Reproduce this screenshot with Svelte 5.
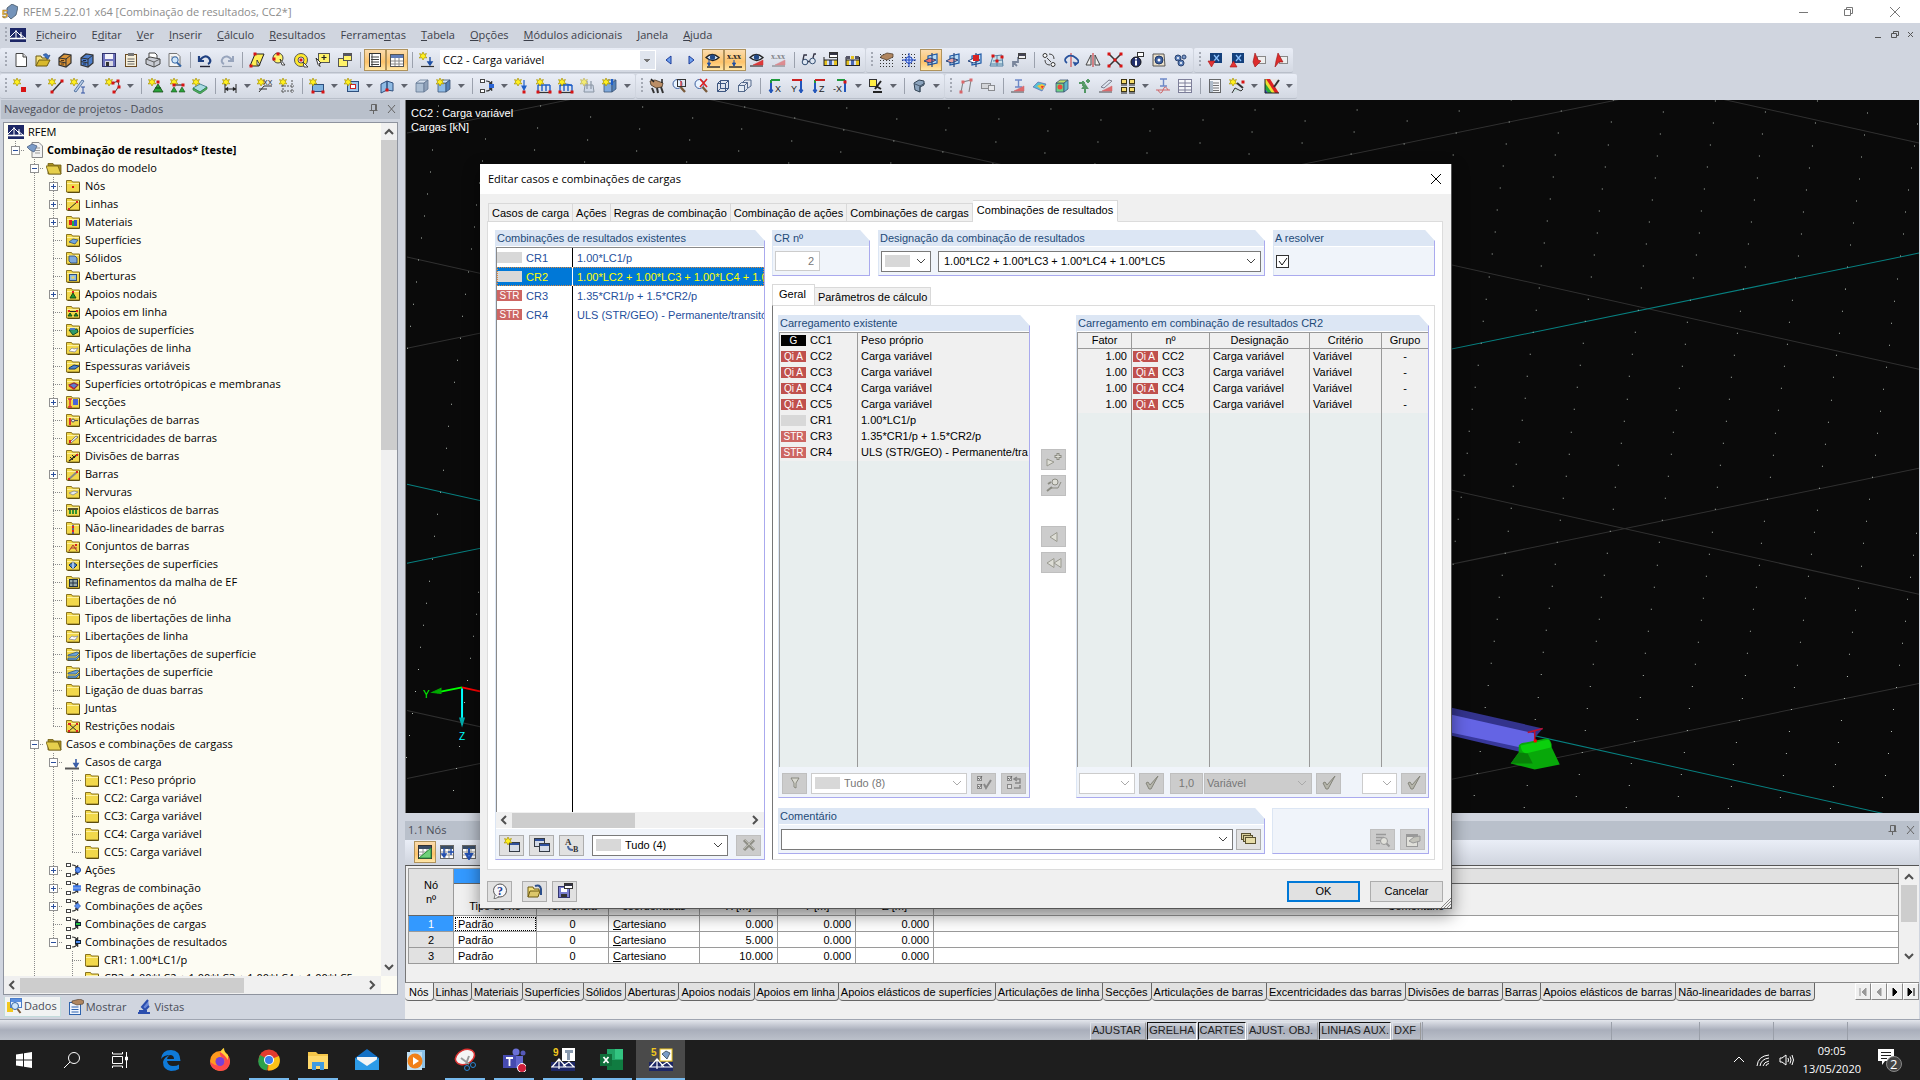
<script>
    // =========================
    // ICON HELPERS
    // =========================

    const p = (d, stroke = '#333', fill = 'none', w = 1.2) =>
        `<path d="${d}" stroke="${stroke}" fill="${fill}" stroke-width="${w}"/>`;
    const r = (x, y, w, h, fill, stroke = 'none') =>
        `<rect x="${x}" y="${y}" width="${w}" height="${h}" fill="${fill}" stroke="${stroke}"/>`;
    const c = (x, y, rad, fill, stroke = 'none') =>
        `<circle cx="${x}" cy="${y}" r="${rad}" fill="${fill}" stroke="${stroke}"/>`;

    const star = p('M4 0l1 2.4L7.400 1.500 6.200 4 8 5.800 5.300 5.700 4 8 2.900 5.700.200 6 1.700 4 .600 1.600 3 2.400z', '#a89200', '#fff01e', 0.7);
    const dot = (x, y) => r(x - 1.5, y - 1.5, 3, 3, '#d81414');
    const win = (x, y, w, h) =>
        r(x + .5, y + .5, w - 1, h - 1, '#d3dae6', '#333a44') + r(x + 1, y + 1, w - 2, 2, '#2d4f9c');
    const lens = c(6.5, 6, 4.5, '#eaf4ff', '#3b5f9e') + p('M9.500 9l4.500 5', '#7a5a3a', 'none', 2.4);
    const cabinet = (a, b) =>
        p('M2 6l5-4 7 1v8l-5 4-7-2z', '#333', a) + p('M9 15V7l5-4M2 6l7 1M2 9.500l7 1.500', '#333', 'none', 1) + r(4, 8, 3, 1, b) + r(4, 11.5, 3, 1, b);
    const flow = (end) =>
        r(1.5, 1.5, 4, 3, '#fff', '#444') + r(1.5, 11.5, 4, 3, '#fff', '#444') +
        p('M7 3q4 0 5 3M7 13q4 0 5-3', '#333', 'none', 1.2) + p('M10 6h3v-3z', '#333', '#333', .5) + p('M10 10h3v3z', '#333', '#333', .5) + end;
    const box = (a, b, d) =>
        p('M2 5h8v9H2z', '#3c5677', a, .8) + p('M2 5l4-3h8l-4 3z', '#3c5677', b, .8) + p('M10 5l4-3v9l-4 3z', '#3c5677', d, .8);
    const axis = (x, label, col) =>
        p('M4 2v12M4 2h9', col, 'none', 2) + p('M2 12h4l-2 3z', '#2255bb', '#2255bb', 1) + p('M4 5v7', '#2255bb', 'none', 2) +
        `<text x="${x}" y="14" font-size="9" font-family="Liberation Sans" fill="#222">${label}</text>`;
    const eye = p('M1 5.500q6-6 13 0-6 6-13 0z', '#222', '#dbe9fa', 1.3) + c(7.5, 5.2, 2.600, '#234a86');
    const eyeText = '<text x="0" y="7" font-size="8" font-weight="700" font-family="Liberation Serif" fill="#222">x.xx</text>';
    const wedge = p('M1 14h13', '#333') + p('M4 13l10-5v5z', '#c33', '#e03a3a', .5);
    const cols = r(1, 8, 3, 5, '#e3c11e') + r(6, 8, 3, 5, '#4a68b4') + r(11, 8, 3, 5, '#e3c11e') + p('M1 5v9M14.500 5v9M1 8h14M1 13.500h14', '#222', 'none', 1);
    const sheet = r(2.5, 1.5, 11, 13, '#fff', '#333') + p('M4 5h8M4 7.500h8M4 10h8M4 12.500h8', '#444', 'none', 1);
    const plane = (a) => p('M5 4l9-2v9l-9 2z', '#1c56a4', '#b7dbf6', 1.2) + p('M1 9l6-3 6 2-6 3z', '#27477f', a, 1) + p('M9 1v14', '#27477f');
    const dots = p('M1 8.500h14M1 11.500h14M1 14.500h14M1 5.500h14M1 2.500h14', '#333', 'none', 1.1).replace('/>', ' stroke-dasharray="1 2"/>');
    const bridge = r(0, 1, 16, 14, '#1d2766') + p('M0 11.500h16', '#fff', 'none', 1.6) + p('M0 10l6-6 6 6M6 3v8M11 5v6M10 7l5 4', '#fff', 'none', 1);
    const loads = p('M2 7v6M6 7v6M10 7v6M14 7v6M2 7h12', '#1f5fc8', 'none', 1.4) + p('M1 14.500h14', '#333', 'none', 1.200) + dot(2, 14) + dot(14, 14);

    const icons = {
        new: p('M3 1.500h7l3.500 3.500v9.500H3z', '#444', '#fff', 1) + p('M10 1.500V5h3.500', '#444', '#ddd', 1),
        open: p('M1 14V4h5l1 2h5v3', '#6d5a13', '#f4e07a', 1) + p('M1 14l3-6h11l-3 6z', '#6d5a13', '#d9b92c', 1) + p('M8 3q4-3 5 1l2-1-2 4-3-2', '#2c4f8a', '#3b72c4', .8),
        cab1: cabinet('#d8943a', '#5d3408'),
        cab2: cabinet('#4d7ecb', '#14264f'),
        save: r(1.5, 1.5, 13, 13, '#6e73bd', '#33366e') + r(4, 2, 8, 5, '#f3f3fa') + r(4, 9, 8, 5, '#d8d8e4') + r(5, 10, 3, 4, '#333'),
        clip: r(2.5, 2.5, 11, 12, '#f6efda', '#6b4b22') + r(5, 1, 6, 3, '#777') + p('M4.500 7h7M4.500 9.500h7M4.500 12h7', '#666', 'none', 1),
        print: p('M4 6V1h6l2 2v3', '#444', '#fff', 1) + p('M1 7l4-2 10 2v5l-6 3-8-3z', '#444', '#c9ccd4', 1) + p('M1 7l8 3 6-3M9 10v5', '#555', 'none', .9),
        preview: p('M2 1.500h8l3 3v10H2z', '#777', '#f3f3f3', 1) + p('M4 5h6M4 7h5', '#999', 'none', 1) + c(8, 8, 3.2, '#cfe6fa', '#3566a5') + p('M10 10.500l4 4', '#3566a5', 'none', 2),
        undo: p('M2 4v5h5M3 8q5-6 9-2 3 4-1 6', '#1e3f80', 'none', 2.2) + p('M3 14.500h10', '#223', 'none', 1.4),
        redo: p('M14 4v5H9M13 8q-5-6-9-2-3 4 1 6', '#98a5bd', 'none', 2) + p('M3 14.500h10', '#9aa3b3', 'none', 1.2),
        sel1: p('M6 2h9l-5 12H1z', '#222', '#ffee55', 1) + p('M8 8l3 5h-3z', '#222', '#fff', .8) + dot(6, 2) + dot(2, 14),
        sel2: c(7, 6, 5, '#fff36a', '#444') + dot(7, 2) + dot(3, 7) + p('M9 7l5 6-3 0z', '#222', '#fff', .8),
        sel3: c(8, 8, 6.5, '#ffe92c', '#555') + c(8, 8, 3, '#fff', '#555') + dot(8, 8) + p('M10 10l5 5h-4z', '#222', '#fff', .8),
        sel4: r(3.5, 1.5, 11, 9, '#fff36a', '#555') + p('M9 3v5M6.500 5.500h5', '#222') + p('M1 6l5 5-2 .500 1 3-2-2z', '#222', '#fff', .9),
        sel5: r(1.5, 6.500, 9, 8, '#fff36a', '#555') + r(6.5, 1.500, 8, 7, '#fff36a', '#555') + r(7, 2, 7, 2, '#556'),
        nav: sheet + p('M5 2v12', '#444', 'none', 1),
        tbl: r(1.5, 2.500, 13, 12, '#fff', '#555') + r(2, 3, 12, 3, '#5f7cb8') + p('M2 9h12M2 12h12M6 6v8M10 6v8', '#888', 'none', 1),
        lcnew: star + p('M2 14.500h13', '#333') + p('M11 5v7M9 10l2 3 2-3z', '#1d4fa5', '#1d4fa5', 1.4),
        left: p('M10 4v8L5 8z', '#1d3c9a', '#6d9fee', 1),
        right: p('M6 4v8l5-4z', '#1d3c9a', '#6d9fee', 1),
        eye1: eye + p('M2 15h13', '#333', 'none', 1.500) + p('M4 7v6M2.500 11l1.500 3 1.500-3z', '#1d4fa5', '#1d4fa5', 1),
        eye2: eyeText + p('M2 15h13', '#333', 'none', 1.500) + p('M7 8v5M5.500 11l1.500 3 1.500-3z', '#1d4fa5', '#1d4fa5', 1),
        eye3: wedge + eye,
        eye4: '<g opacity=".5">' + eyeText + wedge + '</g>',
        glasses: c(4, 10, 2.800, '#dde6f2', '#334d70') + c(11.500, 9, 2.800, '#dde6f2', '#334d70') + p('M2 8L3 3h3M12 6l1-4h2M7 9.500h1.800', '#334', 'none', 1.300),
        calc1: cols + r(6.500, .500, 8, 5, '#fff', '#333') + r(7, 1, 7, 2, '#334'),
        calc2: cols + r(1, 4, 4, 3, '#556') + r(6, 4, 3, 3, '#e3c11e') + r(10, 4, 4, 3, '#556'),
        grid1: dots + p('M2 4l6-3 6 1v3l-6 3-6-2z', '#543', '#b08660', .8),
        grid2: dots + c(8, 8, 3.300, '#cfe0ff', '#1740c0') + p('M8 1v14M1 8h14', '#1740c0', 'none', 1),
        pl1: plane('#e86b6b'),
        pl2: plane('#e9a2a2'),
        pl3: plane('#ffffff') + r(6, 3, 6, 6, '#d62222'),
        pl4: p('M1 14L4 4l9-1 1 11zM4 9l9-1M8 4v10M2 12h12', '#5580a3', '#c9e1ea', 1) + dot(4, 4) + dot(8, 9) + dot(13, 5),
        pl5: p('M2 15v-5h5V6h3M2 10l4 4', '#7a869c', 'none', 1.800) + r(7.500, 1.500, 7, 5, '#eee', '#444') + r(8, 2, 6, 2, '#445'),
        move: c(4, 3.500, 2, '#fff', '#333') + c(12, 12.500, 2, '#fff', '#333') + p('M8 2q5 0 5 5M4 8q0 5 5 5', '#444', 'none', 1) + p('M6 6l4 4', '#444', 'none', 1),
        rot: p('M8 1v14', '#c33', 'none', 1) + p('M4 11Q0 8 4 5t9 1 0 6', '#27519c', 'none', 1.700) + p('M10 10l2 4 3-3z', '#27519c', '#27519c', .5),
        mirror: p('M6 3v10H1zM10 3v10h5z', '#444', '#eee', 1) + p('M8 1v14', '#c22', 'none', 1),
        cross: p('M2 2l12 12M14 2L2 14', '#333', 'none', 1.5) + dot(2, 2) + dot(14, 2) + dot(2, 14) + dot(14, 14) + dot(8, 8),
        info: c(7, 10, 5, '#22306e', '#111') + r(6, 8.500, 2, 5, '#fff') + r(6, 6, 2, 1.500, '#fff') + r(8.500, .500, 6, 4, '#fff', '#333'),
        gearp: p('M2 2h11l1 12H2z', '#555', '#eadfc8', 1) + c(8, 8, 4, '#3d5f9e', '#1e3766') + c(8, 8, 1.500, '#fff'),
        gears: c(5, 6, 3, '#5d80b8', '#2a4371') + c(11, 5, 2, '#7f9cca', '#2a4371') + c(8, 11, 3, '#5d80b8', '#2a4371') + c(5, 6, 1, '#fff') + c(8, 11, 1, '#fff'),
        ext1: r(3, 1, 12, 10, '#14407c') + p('M7 3l5 6M12 3L7 9', '#8cc2ff') + p('M1 9h7l-3.500 6z', '#a11', '#e23434', .6),
        ext2: r(3, 1, 12, 10, '#14407c') + p('M7 3l5 6M12 3L7 9', '#8cc2ff') + p('M1 15h7L4.500 9z', '#a11', '#e23434', .6),
        ext3: r(6.5, 4.500, 8, 7, '#eee', '#888') + p('M4 1l3 7 3 1-6 6-2-5z', '#911', '#dd2c2c', .6),
        ext4: r(6.5, 4.500, 8, 7, '#eee', '#888') + p('M5 1l5 9-4 0-4 5 1-6z', '#911', '#dd2c2c', .6),
        // second row
        node: star + r(8, 9, 5, 5, '#d81414'),
        line: star + p('M4 14L14 3', '#333', 'none', 1.400) + dot(4, 14) + dot(14, 3),
        bar: star + p('M4 13L12 2l2 1L6 14z', '#3c5f92', '#b8cde8', .8) + p('M11 9h4M13 9v6M11 15h4', '#3455a4', 'none', 1),
        poly: star + p('M8 5l5-2 1 5-4 6', '#444', 'none', 1) + dot(8, 5) + dot(13, 3) + dot(14, 9) + dot(9, 14),
        supp: star + p('M10 6l5 8H5z', '#174d17', '#2aa33a', .8) + p('M7 10h6', '#174d17') + dot(10, 4),
        supl: star + p('M3 7h11', '#333') + p('M4 9l3 5H1zM12 9l3 5H9z', '#174d17', '#2aa33a', .6) + dot(4, 7) + dot(13, 7),
        sups: p('M1 10l7-4 7 3-7 5z', '#3f7f8a', '#a9dbe2', .9) + p('M1 10v2l7 4 7-5V9l-7 5z', '#2c7a3c', '#4db35f', .7) + star,
        dim: star + p('M3 6v9M14 6v9M3 11h11', '#222', 'none', 1) + p('M3 11l3-2v4zM14 11l-3-2v4z', '#222', '#222', .3),
        xx: star + '<text x="6" y="7" font-size="7" font-family="Liberation Sans" fill="#222">XX</text>' + p('M2 14l5-6h8M2 11h8', '#333', 'none', 1),
        guide: star + p('M4 7v8M13 2v13M2 8h13M2 13h13', '#555', 'none', 1).replace('/>', ' stroke-dasharray="2 1"/>'),
        surf: r(3.5, 6.500, 11, 7, '#7fb3e0', '#2e4f7d') + star + dot(4, 14) + dot(14, 14),
        opening: r(3.5, 3.500, 11, 10, '#9cc4ea', '#2e4f7d') + r(6.5, 6.500, 5, 4, '#fff', '#c22') + star,
        wall: p('M2 6l6-3v9l-6 3zM8 3l6 2v8l-6-1z', '#2e4f7d', '#8fbbe4', 1) + dot(8, 12),
        solid: '<g opacity=".75">' + box('#9db4cc', '#d3e0ee', '#748ba8') + '</g>',
        solidn: box('#8fbce8', '#cfe4f8', '#5583b9') + star,
        comb: flow(p('M10 8h5', '#2a64d4', 'none', 4)),
        ld1: star + p('M10 2v8M8 8l2 4 2-4z', '#1f5fc8', '#1f5fc8', 1.200) + dot(10, 14),
        ld2: loads + star,
        ld3: loads + p('M2 8q6-4 12 0', '#1f5fc8') + star,
        ld4: '<g opacity=".6">' + p('M5 7h8l1 7H4z', '#567', '#c7d3e6', 1) + p('M7 3v8M11 3v8', '#567') + star + '</g>',
        ld5: box('#7fa9dc', '#cfe4f8', '#5583b9') + p('M10 1v6', '#1f5fc8', 'none', 2) + star,
        grab: p('M1 3l5-1 8 3-1 4-6 1-5-3z', '#432', '#bb8e66', .8) + p('M3 10l2 5M8 10l1 5M12 9l2 6', '#333', 'none', 2) + p('M2 1l3 3M13 1v4', '#222', 'none', 1.500),
        zoom1: lens + r(6.5, 1.500, 8, 7, 'none', '#333') + p('M10 3v5', '#d22'),
        zoom2: lens + p('M7 1l7 8M14 1L7 9', '#d22', 'none', 1.600),
        cube1: p('M2.500 5.500h8v8h-8zM5.500 2.500h8v8h-8zM2.500 5.500l3-3M10.500 5.500l3-3M10.500 13.500l3-3M2.500 13.500l3-3', '#3c5580', 'none', 1),
        cube2: r(1.5, 7.500, 6, 6, '#e5ecf5', '#556a8c') + p('M1.500 7.500l3-3h6v6l-3 3M7.500 7.500l3-3', '#556a8c', 'none', 1) + p('M6 4l2-2h6v6l-3 2', '#556a8c', 'none', 1),
        ax: axis(8, 'X', '#1f9a3c'),
        ay: p('M12 2v12', '#2255bb', 'none', 2) + p('M3 2h10', '#c22', 'none', 2) + p('M10 12h4l-2 3z', '#2255bb', '#2255bb', 1) + '<text x="2" y="14" font-size="9" font-family="Liberation Sans" fill="#222">Y</text>',
        az: axis(8, 'Z', '#1f9a3c') + p('M4 2h10', '#c22', 'none', 2),
        amx: p('M12 2v12', '#2255bb', 'none', 2) + p('M4 2h8', '#1f9a3c', 'none', 2) + dot(12, 4) + '<text x="0" y="14" font-size="9" font-family="Liberation Sans" fill="#222">-X</text>',
        scope: r(1.5, 1.500, 7, 7, '#ffee44', '#333') + p('M13 3L7 11M5 14h9M8 8l5 3', '#222', 'none', 2),
        stone: p('M3 5l5-3 5 1v4l-4 2v5l-5-2z', '#345', '#8ba3bd', 1) + p('M4 6l5 2 5-3M9 8v6', '#345', 'none', .8),
        frame: '<g opacity=".6">' + p('M3 14L5 4l8-2-2 12', '#444', 'none', 1.100) + dot(5, 4) + dot(13, 2) + dot(3, 14) + '</g>',
        cam: '<g opacity=".6">' + r(1.5, 5.500, 9, 5, '#ccc', '#555') + r(8.5, 7.500, 6, 5, '#eee', '#555') + '</g>',
        res1: '<g opacity=".7">' + p('M5 2h7M8.500 2v7M5 9h7', '#3c62b8', 'none', 1.400) + wedge + '</g>',
        res2: p('M1 9l5-5 8 2-4 7z', '#55a', '#56c0d4', .6) + p('M5 8l5-2 3 2-3 4z', 'none', '#f4c03a') + p('M9 8l3 0-2 3z', 'none', '#e33'),
        res3: box('#6fd086', '#bfe06a', '#5fb7c9') + c(6, 9, 2.500, '#ef4a3a'),
        res4: '<g opacity=".7">' + p('M9 15v-7M7 10l2-3 2 3z', '#197a2b', '#197a2b', 2) + p('M3 5h6M7 3v5', '#197a2b', 'none', 2) + p('M12 1v4M10 3h4', '#197a2b', 'none', 2) + '</g>',
        res5: '<g opacity=".7">' + p('M3 9l8-7 3 1-8 7z', '#556', '#dfe7f2', 1) + wedge + '</g>',
        quad: r(1.5, 1.500, 5, 4, '#f6dc6e', '#3c3412') + r(9.5, 1.500, 5, 4, '#f6dc6e', '#3c3412') + r(1.5, 9.500, 5, 4, '#f6dc6e', '#3c3412') + r(9.5, 9.500, 5, 4, '#f6dc6e', '#3c3412') + p('M1 7h6M9 7h6M1 15h6M9 15h6', '#222', 'none', 1.2),
        res6: '<g opacity=".7">' + p('M5 1h7M8.500 1v7M5 8h7', '#3c62b8', 'none', 1.400) + p('M1 12h14M3 12q3 6 5 0t5 0', '#c33', 'none', 1) + '</g>',
        res7: '<g opacity=".7">' + r(1.5, 1.500, 13, 13, '#fff', '#557') + p('M8 1v14M1 5h14M1 8.500h14M1 12h14', '#557', 'none', 1) + '</g>',
        rep: '<g opacity=".7">' + sheet + r(3, 3, 3, 11, '#9ab') + '</g>',
        wand: star + p('M3 15l3-5 6 3 2-2', '#333', '#cdd', 1) + p('M8 5l6 5', '#333', 'none', 2) + dot(14, 4),
        palette: r(1, 1, 14, 14, '#e5e5e5') + p('M1 1h2l10 14H1z', 'none', '#eee033') + p('M2 1h4l9 14h-4z', 'none', '#d22') + p('M1 5l7 10H4l-3-4z', 'none', '#28a83c') + p('M1 11l3 4H1z', 'none', '#24c') + p('M15 2l-5 7', '#333', 'none', 2) + p('M1 1v14h14', '#222', 'none', 1),
        // dialog buttons
        wnew: win(5, 5, 11, 10) + star,
        wcopy: win(0, 1, 11, 9) + win(5, 6, 11, 9),
        renum: '<text x="1" y="8" font-size="9" font-weight="700" font-family="Liberation Serif" fill="#333">A</text><text x="9" y="15" font-size="8" font-weight="700" font-family="Liberation Serif" fill="#333">B</text>' + p('M4 9q0 4 5 4', '#4a69a5', 'none', 2),
        del: p('M3 3l10 10M13 3L3 13', '#8e8e86', 'none', 3) + p('M3 2l10 10M13 2L3 12', '#b9b9b0', 'none', 1),
        help: c(8, 7.500, 6.500, '#f7f7fb', '#555') + p('M3 12l-1 4 5-2', '#555', '#f7f7fb', .8) + '<text x="5" y="12" font-size="12" font-weight="700" font-family="Liberation Serif" fill="#25408f">?</text>',
        load: p('M1 14V4h5l1 2h5v3', '#6d5a13', '#f4e07a', 1) + p('M1 14l2-6h10l-2 6z', '#6d5a13', '#dcc76a', 1) + p('M8 3q5-2 6 3v6', '#2c4f8a', 'none', 2),
        store: r(1.5, 3.500, 11, 11, '#7a7fd0', '#33366e') + r(4, 5, 6, 4, '#fff') + r(4, 11, 6, 3, '#333') + r(7.500, .500, 8, 5, '#fff', '#333') + r(8, 1, 7, 2, '#334'),
        funnel: p('M4 3h8l-3 5v5l-2-1V8z', '#88887e', '#d8d8d0', 1),
        chk: r(1.5, 1.500, 4, 4, '#ddd', '#888') + r(1.5, 9.500, 4, 4, '#ddd', '#888') + p('M2 3l1.500 1.500L6 1M2 11l1.500 1.500L6 9', '#666', 'none', 1) + p('M8 9l2 4 5-8', '#888', 'none', 2),
        inv: r(1.5, 1.500, 4, 4, '#ddd', '#888') + r(1.5, 9.500, 4, 4, '#ddd', '#888') + p('M2 3l1.500 1.500L6 1', '#666', 'none', 1) + p('M8 4h6v4H9M11 2L8 4l3 2M14 10v3H8', '#888', 'none', 1.500),
        tick: p('M2 8l2-1 2 3 8-9-7 13H5z', '#85857b', '#b4b4aa', 1),
        addp: p('M1 7l7 3-7 4z', '#99998f', '#deded6', 1) + p('M12 1v7M8.500 4.500h7', '#8b8b82', 'none', 3) + p('M12 2v5M9.500 4.500h5', '#e0e0d8', 'none', 1),
        addi: p('M1 13l5-4M2 6l3-2', '#8b8b82', 'none', 2) + c(9, 4, 3, '#deded6', '#8b8b82') + p('M4 10l8 0 3-6', '#8b8b82', 'none', 1),
        back: p('M11 3.500v9L4 8z', '#99998f', '#deded6', 1),
        back2: p('M8 3.500v9L1 8zM15 3.500v9L8 8z', '#99998f', '#deded6', 1),
        notes: r(.5, 2.500, 9, 6, '#d9cf9b', '#5a5230') + r(2.5, 4.500, 9, 6, '#d9cf9b', '#5a5230') + r(4.5, 6.500, 10, 6, '#e6dca8', '#5a5230'),
        look: p('M1 2.500h10M1 5.500h8M1 8.500h5M1 11.500h4', '#999', 'none', 1.400) + c(9, 9, 3.500, '#e0e0da', '#999') + p('M11.500 11.500l3 3', '#999', 'none', 2),
        hand: r(1.5, 2.500, 11, 12, '#e0e0da', '#999') + r(2, 3, 10, 2, '#999') + p('M4 9l4 2 7-2V4l-6 1z', '#999', '#c2c2ba', 1),
        // table tool bar
        tb1: r(1.5, 1.500, 13, 13, '#fff', '#333') + r(2, 2, 12, 3, '#3a4d66') + p('M2 8h12M2 11h12M6 5v9M10 5v9', '#999', 'none', 1) + p('M2 14L14 4v10z', '#2b8f38', '#6fd07a', 1),
        tb2: r(1.5, 1.500, 13, 13, '#fff', '#666') + r(2, 2, 12, 3, '#3a4d66') + p('M2 8h12M2 11h12M6 5v9M10 5v9', '#999', 'none', 1) + p('M5 4v8M3 10l2 3 2-3zM9 8h6M12 5v6', '#2450b0', '#2450b0', 1.500),
        tb3: r(1.5, 1.500, 13, 13, '#fff', '#666') + r(2, 2, 12, 3, '#3a4d66') + p('M2 8h12M2 11h12M6 5v9M10 5v9', '#999', 'none', 1) + p('M8 4v7M5 10l3 5 3-5z', '#2450b0', '#4d7ce0', 2),
        // navigator tabs
        tdata: r(1, 4, 6, 10, '#f2c81e') + r(4.500, .500, 11, 9, '#eef4fd', '#4a7cc8') + r(5, 1, 10, 3, '#5a8fe0') + c(9, 8, 3.500, '#cfe6fa', '#3566a5') + p('M11.500 11l3 4', '#7a5a3a', 'none', 2),
        tshow: r(1.500, 3.500, 11, 12, '#eef4fd', '#2e63ad') + p('M3.500 8h7M3.500 10.500h7M3.500 13h7', '#2e63ad', 'none', 1) + p('M4 2l8-2 4 2-1 3-6 1-5-2z', '#543', '#b08660', .7),
        tview: p('M12 1L6 8l3 3 4-4M2 14h12M3 12l8 0', '#2c4fae', '#6a88d8', 2),
        // tree
        rfem: bridge,
        doc: p('M5 .500h7l3.500 3.500v11.500H5z', '#888', '#f3f3f3', 1) + p('M8 6h5M8 8.500h5M8 11h5', '#999', 'none', 1) + p('M0 5l5-3 5 2-3 6-4-2z', '#4b6184', '#7b9cc8', .8),
        folderOpen: p('M2 3.500h5l1 1.500h7v9H2z', '#6d5c12', '#a88f20', .8) + p('M0 6h12l3 8H3z', '#6d5c12', '#e6cf4c', .8),
        cases: p('M0 14.500h14', '#555', 'none', 2) + p('M11 5v6M9 9.500l2 3.500 2-3.500z', '#3c5fa8', '#3c5fa8', 1.600),
        act: flow(c(13, 8, 2.600, '#5b90f0', '#2450b0')),
        rules: flow(p('M8 6.500h8M8 9.500h8', '#3d77e8', 'none', 2.4)),
        combA: flow(p('M12.500 5l3 3-3 3-3-3z', '#2450b0', '#5b90f0', .8)),
        combC: flow(r(10.500, 6.500, 5, 3, '#27c040', '#123')),
        combR: flow(r(10.500, 6.500, 5, 3, '#4f8cf0', '#123'))
    };

    const folderMarks = {
        none: '',
        node: r(7, 8, 2, 2, '#d81414'),
        line: p('M4 13L12 6', '#222', 'none', 1) + r(3, 12, 2, 2, '#d22') + r(11, 5, 2, 2, '#d22'),
        mat: r(4, 6, 3, 5, '#d22') + r(7, 7, 3, 5, '#2a4') + r(9, 6, 3, 6, '#35c'),
        surf: p('M4 10l4-3 5 1-3 4z', '#2e4f7d', '#6ea5e0', .8),
        solid: p('M4 6h6l2 2v5H6l-2-2z', '#2e4f7d', '#7fa9dc', .9),
        open: r(4.500, 6.500, 7, 6, '#8fbbe4', '#2e4f7d') + r(6.500, 8.500, 3, 2, '#f0d850'),
        sup: p('M8 7l3 5H5z', '#174d17', '#1e9a30', 1) + r(7, 5, 2, 2, '#d22'),
        supl: p('M3 7.500h10', '#222', 'none', 1) + p('M5 9l2 3H3zM11 9l2 3H9z', '#174d17', '#1e9a30', 1) + r(3, 6, 2, 2, '#d22') + r(11, 6, 2, 2, '#d22'),
        sups: p('M4 8l8-1 1 3-5 3z', '#14502a', '#2f9a6a', 1) + r(5, 6, 5, 2, '#4a7ac4'),
        white: p('M4 11l3-3 2 1 4-1-3 4z', '#889', '#fff', .8),
        thick: p('M4 10l5-3 5 1-4 3H4z', '#16376e', '#4f86cc', 1),
        ortho: p('M4 9l5-2 4 2-4 4z', '#8a2a4a', '#5b7fd0', 1.2) + p('M4 10l5 3', '#d22'),
        sect: p('M5 5v8M3 5h4M3 13h4', '#d33', 'none', 1.500) + r(8, 5, 5, 6, '#4a66d8'),
        hinge: r(4, 6, 2, 7, '#d33') + p('M6 8.500h7', '#555') + c(8, 8.500, 1.500, '#eee', '#555'),
        ecc: p('M4 13l7-7 2 1-7 6z', '#666', '#eee', .8) + r(4, 10, 2, 3, '#d22'),
        div: p('M4 13L13 6', '#222') + p('M7 7l3 3M5 9l3 3', '#222', 'none', 1) + r(11, 6, 2, 2, '#d22'),
        bar: p('M4 13l8-7', '#888', 'none', 2) + r(3, 12, 2, 2, '#d22') + r(11, 5, 2, 2, '#d22'),
        rib: p('M4 9l5-2 4 1-5 3z', '#888', '#e8ecef', .8),
        elast: p('M3 7h10', '#222', 'none', 1.500) + p('M5 8v4M8 8v4M11 8v4', '#1e8a30', 'none', 1.800),
        nonlin: p('M8 5v9', '#33a', 'none', 1.500) + r(7, 6, 2, 2, '#d22') + r(7, 10, 2, 2, '#d22'),
        set: p('M4 13l4-6 4 6M6 10h6', '#a33', 'none', 1) + r(10, 6, 2, 2, '#d22'),
        inter: p('M4 9l4-3 4 3-4 4z', '#15305e', '#4f86cc', 1) + p('M8 6v7', '#fff', 'none', 1),
        mesh: r(4.500, 5.500, 8, 7, '#9aa', '#234') + p('M4 9h8M8 5v8', '#234', 'none', 1),
        rels: p('M3 9l9-3 2 1-3 3H3zM3 12l8 0 3-3v2l-3 3H3z', '#31567f', '#6ba4da', .8),
        restr: p('M4 6l8 7M12 6l-8 7', '#333', 'none', 1) + r(3, 5, 3, 2, '#d22') + r(11, 5, 2, 2, '#d22') + r(3, 12, 2, 2, '#d22') + r(11, 12, 2, 2, '#d22')
    };

    const folder = (mark) =>
        p('M1.500 2.500h5l1 1.500h7v10h-13z', '#8a7420', '#f2d84a', 1) + p('M2 5.500h12', '#fff2a0', 'none', 1) + p('M14.500 5v9.500h-12', '#5c4c10', 'none', 1) + folderMarks[mark];

    // =========================
    // MENUS AND TOOL BARS
    // =========================

    const menus = ['&Ficheiro', 'E&ditar', '&Ver', '&Inserir', '&Cálculo', '&Resultados', 'Ferrame&ntas', '&Tabela', '&Opções', '&Módulos adicionais', '&Janela', '&Ajuda']
        .map((m) => {
            const at = m.indexOf('&');
            return [m.slice(0, at), m[at + 1], m.slice(at + 2)];
        });

    // "|" separator, "#" load case box, "*" pressed, trailing "," drop arrow
    const toolRows = [
        [
            'new open cab1 cab2 save clip print preview | undo redo | sel1 sel2 sel3 sel4 sel5 | *nav *tbl | lcnew # left right *eye1 *eye2 eye3 eye4 | glasses calc1 calc2',
            'grid1 grid2 *pl1 pl2 pl3 pl4 pl5 | move rot mirror cross info gearp gears',
            'ext1 ext2 ext3 ext4'
        ],
        [
            'node, line bar, poly, | supp supl sups | dim, xx guide | surf, opening, wall, solid solidn, | comb, ld1 ld2 ld3 ld4 ld5,',
            'grab zoom1 zoom2 cube1 cube2 | ax ay az amx, scope, | stone,',
            'frame cam | res1 res2 res3 res4 res5 quad, res6 res7 | rep wand, palette,'
        ]
    ].map((row) => row.map((bar) => bar.split(' ')));

    // =========================
    // TREE
    // =========================

    // guides: one character per column, the last one is the item's own
    // "|" line through, " " nothing, "T" branch, "L" last branch
    const tree = [
        ['', 'RFEM', 'rfem'],
        ['L', 'Combinação de resultados* [teste]', 'doc', '-'],
        [' T', 'Dados do modelo', 'folderOpen', '-'],
        [' |T', 'Nós', '/node', '+'],
        [' |T', 'Linhas', '/line', '+'],
        [' |T', 'Materiais', '/mat', '+'],
        [' |T', 'Superfícies', '/surf'],
        [' |T', 'Sólidos', '/solid'],
        [' |T', 'Aberturas', '/open'],
        [' |T', 'Apoios nodais', '/sup', '+'],
        [' |T', 'Apoios em linha', '/supl'],
        [' |T', 'Apoios de superfícies', '/sups'],
        [' |T', 'Articulações de linha', '/white'],
        [' |T', 'Espessuras variáveis', '/thick'],
        [' |T', 'Superfícies ortotrópicas e membranas', '/ortho'],
        [' |T', 'Secções', '/sect', '+'],
        [' |T', 'Articulações de barras', '/hinge'],
        [' |T', 'Excentricidades de barras', '/ecc'],
        [' |T', 'Divisões de barras', '/div'],
        [' |T', 'Barras', '/bar', '+'],
        [' |T', 'Nervuras', '/rib'],
        [' |T', 'Apoios elásticos de barras', '/elast'],
        [' |T', 'Não-linearidades de barras', '/nonlin'],
        [' |T', 'Conjuntos de barras', '/set'],
        [' |T', 'Interseções de superfícies', '/inter'],
        [' |T', 'Refinamentos da malha de EF', '/mesh'],
        [' |T', 'Libertações de nó', '/none'],
        [' |T', 'Tipos de libertações de linha', '/none'],
        [' |T', 'Libertações de linha', '/white'],
        [' |T', 'Tipos de libertações de superfície', '/rels'],
        [' |T', 'Libertações de superfície', '/rels'],
        [' |T', 'Ligação de duas barras', '/none'],
        [' |T', 'Juntas', '/none'],
        [' |L', 'Restrições nodais', '/restr'],
        [' T', 'Casos e combinações de cargass', 'folderOpen', '-'],
        [' |T', 'Casos de carga', 'cases', '-'],
        [' ||T', 'CC1: Peso próprio', '/none'],
        [' ||T', 'CC2: Carga variável', '/none'],
        [' ||T', 'CC3: Carga variável', '/none'],
        [' ||T', 'CC4: Carga variável', '/none'],
        [' ||L', 'CC5: Carga variável', '/none'],
        [' |T', 'Ações', 'act', '+'],
        [' |T', 'Regras de combinação', 'rules', '+'],
        [' |T', 'Combinações de ações', 'combA', '+'],
        [' |T', 'Combinações de cargas', 'combC'],
        [' |L', 'Combinações de resultados', 'combR', '-'],
        [' | T', 'CR1: 1.00*LC1/p', '/none'],
        [' | T', 'CR2: 1.00*LC2 + 1.00*LC3 + 1.00*LC4 + 1.00*LC5', '/none']
    ];

    // =========================
    // DIALOG DATA
    // =========================

    const dialogTabs = ['Casos de carga', 'Ações', 'Regras de combinação', 'Combinação de ações', 'Combinações de cargas', 'Combinações de resultados'];
    let activeTab = $state(5);

    const results = [
        ['', 'CR1', '1.00*LC1/p'],
        ['', 'CR2', '1.00*LC2 + 1.00*LC3 + 1.00*LC4 + 1.00*LC5'],
        ['STR', 'CR3', '1.35*CR1/p + 1.5*CR2/p'],
        ['STR', 'CR4', 'ULS (STR/GEO) - Permanente/transitória']
    ];
    let selected = $state(1);

    const existing = [
        ['G', 'CC1', 'Peso próprio'],
        ['Qi A', 'CC2', 'Carga variável'],
        ['Qi A', 'CC3', 'Carga variável'],
        ['Qi A', 'CC4', 'Carga variável'],
        ['Qi A', 'CC5', 'Carga variável'],
        ['', 'CR1', '1.00*LC1/p'],
        ['STR', 'CR3', '1.35*CR1/p + 1.5*CR2/p'],
        ['STR', 'CR4', 'ULS (STR/GEO) - Permanente/tra']
    ];

    const loading = ['CC2', 'CC3', 'CC4', 'CC5'];

    let solve = $state(true);
    let comment = $state('');

    // =========================
    // NODE TABLE
    // =========================

    const nodes = ['0.000', '5.000', '10.000'];

    const sheets = ['Nós', 'Linhas', 'Materiais', 'Superfícies', 'Sólidos', 'Aberturas', 'Apoios nodais', 'Apoios em linha', 'Apoios elásticos de superfícies', 'Articulações de linha', 'Secções', 'Articulações de barras', 'Excentricidades das barras', 'Divisões de barras', 'Barras', 'Apoios elásticos de barras', 'Não-linearidades de barras'];

    const status = [['AJUSTAR'], ['GRELHA', 1], ['CARTES', 1], ['AJUST. OBJ.'], ['LINHAS AUX.', 1], ['DXF']];

    // =========================
    // WORK PLANE GRID
    // =========================

    let gridDots = '';

    for (let i = -8; i < 32; i++) {
        for (let j = -4; j < 40; j++) {
            const half = i % 2 ? 11.2 : 0;
            const x = 540 + i * 51 - j * 2.8 - (i % 2 ? 1.4 : 0);
            const y = 106 + i * 0.25 + j * 22.08 + half;
            gridDots += `M${Math.round(x)} ${Math.round(y)}h1`;
        }
    }

    // heights of the grid lines at the left edge of the view
    const falling = (y) => `M407 ${y}L1918 ${y + 337}`;
    const rising = (y) => `M407 ${y}L1918 ${y - 310}`;
    const gridLines = [-194, 32, 257, 710].map(falling).join('') + [133, 348, 778, 993].map(rising).join('');
    const axisLines = falling(484) + rising(563);

    const taskApps = ['edge', 'firefox', 'chrome', 'explorer', 'mail', 'media', 'snip', 'teams', 'rstab', 'excel', 'rfem'];
    const running = ['chrome', 'explorer', 'snip', 'teams', 'rstab', 'excel', 'rfem'];

    const apps = {
        edge: p('M2 11Q3 2 12 2q9 0 9.500 11H8q1 5 6 5 4 0 6-1.500V21q-3 2-8 2Q4 22 4 14q1-5 7-7-3 2-3 4h7q0-4-4-4-6 0-9 4z', 'none', '#0f7ad8'),
        firefox: c(12, 13, 10, '#ff9a1e') + p('M12 3q10 3 10 11-1 9-10 9Q3 22 2 14q6 5 12 3 5-3 1-7-4-2-3-7z', 'none', '#ff4a4a') + c(12, 13.500, 4.500, '#7a3fd6') + p('M12 4q3-4 4-4 0 4 4 7v5q-4-6-8-8z', 'none', '#ffd23c'),
        chrome: c(12, 12, 10.500, '#e33b2e') + p('M12 12L3 7q-4 8 1 13 4 3 6 2z', 'none', '#2ca24c') + p('M12 12l10-4q3 9-4 13-4 2-7 1.500z', 'none', '#fbc116') + c(12, 12, 5, '#fff') + c(12, 12, 4, '#3b7ded'),
        explorer: p('M2 4h8l2 2h10v15H2z', 'none', '#f5c64a') + r(2, 8, 20, 13, '#ffd96b') + p('M6 22v-8h12v8h-4v-4h-4v4z', 'none', '#3f9be0'),
        mail: p('M0 10L12 1l12 9v12H0z', 'none', '#1470c4') + p('M2 9h20v5l-10 6L2 14z', 'none', '#f5f5f5') + p('M0 10l12 8 12-8v12H0z', 'none', '#2c9be8'),
        media: r(6, 2, 15, 18, '#8bc1e6') + r(3, 4, 15, 18, '#bfdff3') + c(11, 13, 7.500, '#f08019') + p('M9 9l6 4-6 4z', 'none', '#fff'),
        snip: `<ellipse cx="12" cy="9" rx="10" ry="7" fill="#f4f4f4" stroke="#d33" stroke-width="1.500" transform="rotate(-25 12 9)"/>` + p('M16 8l-3 8M8 10l8 6', '#999', 'none', 2) + c(14, 20, 2.500, 'none', '#2c86d4') + c(20, 17, 2.500, 'none', '#2c86d4'),
        teams: c(14, 4, 3.500, '#6b70d8') + c(21, 5, 2.500, '#5559b8') + r(10, 8, 11, 12, '#6267cf') + r(1, 7, 13, 13, '#464bb0') + p('M4 10h7M7.500 10v8', '#fff', 'none', 1.800) + c(20, 20, 4.500, '#d01f3a', '#fff'),
        rstab: r(0, 14, 24, 9, '#1d2766') + p('M0 19h24M1 19l7-8 7 8M8 11v10M12 18l6-4 5 5', '#fff', 'none', 1.200) + r(11, 0, 13, 13, '#fff') + p('M14 2h8v3h-3v7h-3V5h-2z', 'none', '#8a9bb0') + '<text x="2" y="8" font-size="10" font-weight="700" font-family="Liberation Sans" fill="#f2c81e">9</text>',
        excel: r(7, 1, 16, 21, '#21a366') + r(15, 1, 8, 10, '#33c481') + r(7, 12, 16, 10, '#107c41') + r(0, 6, 12, 12, '#0f6f3a') + p('M3.500 9l5 6M8.500 9l-5 6', '#fff', 'none', 1.800),
        rfem: r(0, 14, 24, 9, '#1d2766') + p('M0 19h24M1 19l7-8 7 8M8 11v10M12 18l6-4 5 5', '#fff', 'none', 1.200) + r(11, 1, 12, 12, '#fff', '#f2c81e') + p('M13 6l4-3 4 2-3 6z', '#345', '#7b9cc8', .8) + '<text x="2" y="8" font-size="10" font-weight="700" font-family="Liberation Sans" fill="#f2c81e">5</text>'
    };
</script>

{#snippet icon(name)}
    <svg class="icon" viewBox="0 0 16 16">{@html name[0] === '/' ? folder(name.slice(1)) : icons[name]}</svg>
{/snippet}

{#snippet chevron(dir)}
    <svg class="chevron {dir}" viewBox="0 0 10 10"><path d="M1 3l4 4 4-4" /></svg>
{/snippet}

{#snippet badge(kind)}
    <span class="badge" class:g={kind === 'G'} class:q={kind === 'Qi A'} class:str={kind === 'STR'}>{kind}</span>
{/snippet}

{#snippet tool(name, label, disabled = false)}
    <button class="tool" aria-label={label} {disabled}>{@render icon(name)}</button>
{/snippet}

{#snippet paneIcons()}
    <svg class="pane-icons" viewBox="0 0 30 12">
        <path d="M3.500 1.500h5v6h-5zM7.500 1.500v6M1.500 7.500h8M5.500 8v3M20 2l7 8M27 2l-7 8" />
    </svg>
{/snippet}

<div class="root">

    <!-- TITLE -->

    <header class="titlebar">
        <svg class="icon" viewBox="0 0 16 16">{@html p('M5 4l5-4 6 3-2 8-5 4-4-4z', '#456', '#7594ba', .8) + '<text x="0" y="14" font-size="11" font-weight="700" font-family="Liberation Sans" stroke="#765" stroke-width=".4" fill="#f2b81e">5</text>'}</svg>
        <span>RFEM 5.22.01 x64 [Combinação de resultados, CC2*]</span>
        <svg class="winctl" viewBox="0 0 120 12"><path d="M10 6.500h9M55.500 3.500h6v6h-6zM57.500 3V1.500h6v6H62M101 1l10 10M111 1l-10 10" /></svg>
    </header>

    <!-- MENU -->

    <nav class="menubar">
        <span class="grip"></span>
        {@render icon('rfem')}
        {#each menus as [pre, key, post]}
            <button class="menu">{pre}<u>{key}</u>{post}</button>
        {/each}
        <svg class="mdictl" viewBox="0 0 50 12"><path d="M5 8.500h6M21.500 4.500h5v4h-5zM23.500 4V2.500h5v4H27M38 3l5 5M43 3l-5 5" /></svg>
    </nav>

    <!-- TOOL BARS -->

    {#each toolRows as row}
        <div class="toolrow">
            {#each row as bar}
                <div class="toolbar">
                    <span class="grip"></span>
                    {#each bar as t}
                        {#if t === '|'}
                            <span class="sep"></span>
                        {:else if t === '#'}
                            <label class="lcbox">
                                <select aria-label="Caso de carga"><option>CC2 - Carga variável</option></select>
                                <span class="lcarrow"></span>
                            </label>
                        {:else}
                            <button class="tb" class:on={t[0] === '*'} aria-label={t}>
                                {@render icon(t.replace('*', '').replace(',', ''))}
                            </button>
                            {#if t.endsWith(',')}
                                <span class="drop"></span>
                            {/if}
                        {/if}
                    {/each}
                </div>
            {/each}
        </div>
    {/each}

    <div class="main">

        <!-- NAVIGATOR -->

        <aside class="navigator">
            <div class="panehead">Navegador de projetos - Dados {@render paneIcons()}</div>
            <div class="treebox">
                <div class="tree">
                    {#each tree as [guides, label, ic, exp], i}
                        <div class="node">
                            {#each guides as g, n}
                                <span class="guide" class:through={g === '|' || g === 'T'} class:half={g === 'L'} class:own={n === guides.length - 1}>
                                    {#if exp && n === guides.length - 1}
                                        <button class="exp" class:plus={exp === '+'} aria-label="Expandir"></button>
                                    {/if}
                                </span>
                            {/each}
                            {@render icon(ic)}
                            <span class="label" class:bold={i === 1}>{label}</span>
                        </div>
                    {/each}
                </div>
                <div class="vscroll">{@render chevron('up')}<i></i>{@render chevron('down')}</div>
                <div class="hscroll">{@render chevron('left')}<i></i>{@render chevron('right')}</div>
            </div>
            <div class="navtabs">
                <button class="on">{@render icon('tdata')}Dados</button>
                <button>{@render icon('tshow')}Mostrar</button>
                <button>{@render icon('tview')}Vistas</button>
            </div>
        </aside>

        <div class="work">

            <!-- MODEL VIEW -->

            <div class="viewport">
                <svg viewBox="406 100 1512 713" preserveAspectRatio="xMinYMin slice">
                    <path d={gridLines} stroke="#303030" />
                    <path d={axisLines} stroke="#078080" />
                    <path d={gridDots} stroke="#b5bdb5" />
                    <path d="M1450 707L1542 728 1535 736 1450 716z" fill="#33338c" />
                    <path d="M1450 714L1534 733v12l-14 4-70-15z" fill="#6464e4" />
                    <path d="M1450 732l70 15-2 4-68-16z" fill="#38389c" />
                    <path d="M1527 732l15-4M1534 730v10" stroke="#c01030" stroke-width="1.500" />
                    <path d="M1518 745q2-3 7-3l20-4q6 0 6 9l8 17-25 5-24-6 8-11z" fill="#08a80a" />
                    <path d="M1520 745l28-6q3 5 2 8l-25 6q-5-2-5-8z" fill="#0bd00d" />
                    <path d="M1527 753l5 10-22 0 8-11z" fill="#088008" />
                    <path d="M1533 739h3v3h-3z" fill="#f00" />
                    <path d="M462 687L437 692" stroke="#0f0" stroke-width="2" />
                    <path d="M432 692l9-4v5z" fill="#0a0" stroke="#0a0" />
                    <path d="M462 687l18 4" stroke="#f00" stroke-width="2" />
                    <path d="M462 688v30" stroke="#0ff" stroke-width="2" />
                    <path d="M459 717h6l-3 10z" fill="#0aa" />
                    <text x="423" y="698" fill="#0f0" font-size="10">Y</text>
                    <text x="459" y="740" fill="#0ff" font-size="10">Z</text>
                </svg>
                <div class="caption">CC2 : Carga variável<br />Cargas [kN]</div>
            </div>

            <!-- TABLE PANE -->

            <section class="tablepane">
                <div class="panehead">1.1 Nós {@render paneIcons()}</div>
                <div class="tabletools">
                    <button class="tb on" aria-label="Tabela gráfica">{@render icon('tb1')}</button>
                    <button class="tb" aria-label="Inserir linha">{@render icon('tb2')}</button>
                    <button class="tb" aria-label="Linha seguinte">{@render icon('tb3')}</button>
                </div>
                <div class="sheetbox">
                    <table class="nodes">
                        <colgroup>
                            <col class="c0" /><col class="c1" /><col class="c2" /><col class="c3" /><col class="c4" /><col class="c4" /><col class="c4" /><col />
                        </colgroup>
                        <thead>
                            <tr class="letters">
                                <th rowspan="2" class="corner">Nó<br />nº</th>
                                <th class="blue"></th>
                                <th colspan="6"></th>
                            </tr>
                            <tr class="names">
                                <th>Tipo de nó</th>
                                <th>referência</th>
                                <th>coordenadas</th>
                                <th>X [m]</th>
                                <th>Y [m]</th>
                                <th>Z [m]</th>
                                <th>Comentário</th>
                            </tr>
                        </thead>
                        <tbody>
                            {#each nodes as x, i}
                                <tr>
                                    <th class:blue={i === 0}>{i + 1}</th>
                                    <td class:focus={i === 0}>Padrão</td>
                                    <td class="mid">0</td>
                                    <td><u>C</u>artesiano</td>
                                    <td class="num">{x}</td>
                                    <td class="num">0.000</td>
                                    <td class="num">0.000</td>
                                    <td></td>
                                </tr>
                            {/each}
                        </tbody>
                    </table>
                    <div class="vscroll">{@render chevron('up')}<i></i>{@render chevron('down')}</div>
                </div>
                <div class="sheets">
                    {#each sheets as s, i}
                        <button class:on={i === 0}>{s}</button>
                    {/each}
                    <div class="pager">
                        <button disabled aria-label="Primeiro"><svg viewBox="0 0 10 10"><path d="M2 1v8M8 1v8L4 5z" /></svg></button>
                        <button disabled aria-label="Anterior"><svg viewBox="0 0 10 10"><path d="M7 1v8L3 5z" /></svg></button>
                        <button aria-label="Seguinte"><svg viewBox="0 0 10 10"><path d="M3 1v8l4-4z" /></svg></button>
                        <button aria-label="Último"><svg viewBox="0 0 10 10"><path d="M2 1v8l4-4zM8 1v8" /></svg></button>
                    </div>
                </div>
            </section>
        </div>
    </div>

    <!-- STATUS -->

    <footer class="status">
        {#each status as [s, on]}
            <span class:on>{s}</span>
        {/each}
        <i class="w1"></i><i class="w2"></i><i class="w3"></i><i class="w3"></i><i class="w3"></i>
    </footer>

    <!-- TASK BAR -->

    <div class="taskbar">
        <button class="sys" aria-label="Iniciar"><svg viewBox="0 0 18 18"><path d="M1 3.500l7-1v6H1zM9 2.300L17 1v7.500H9zM1 9.500h7v6l-7-1zM9 9.500h8V17l-8-1.200z" fill="#fff" /></svg></button>
        <button class="sys" aria-label="Procurar"><svg viewBox="0 0 18 18"><circle cx="11" cy="7" r="5.500" /><path d="M7 11l-6 6" /></svg></button>
        <button class="sys" aria-label="Vista de tarefas"><svg viewBox="0 0 18 18"><path d="M1.500 5.500h10v7h-10zM1.500 1v2h10V1M1.500 17v-2h10v2M15.500 1v16M14.500 6h2v3h-2z" /></svg></button>
        {#each taskApps as a}
            <button class="app" class:run={running.includes(a)} class:active={a === 'rfem'} aria-label={a}>
                <svg viewBox="0 0 24 24">{@html apps[a]}</svg>
            </button>
        {/each}
        <div class="tray">
            <svg viewBox="0 0 16 16"><path d="M3 10l5-5 5 5" /></svg>
            <svg viewBox="0 0 16 16"><path d="M2 14Q3 4 14 3M5 14q1-7 9-8M8 14q1-4 6-5M11 14q0-2 3-2.500" /></svg>
            <svg viewBox="0 0 16 16"><path d="M1 6h2l4-3v10l-4-3H1zM9 6q1 2 0 4M11 4.500q2 3.500 0 7M13 3q3 5 0 10" /></svg>
            <div class="clock">09:05<br />13/05/2020</div>
            <svg class="note" viewBox="0 0 26 26"><path d="M1 2h16v12H8l-3 4v-4H1z" fill="#fff" stroke="none" /><path d="M4 5.500h10M4 8.500h10M4 11.500h6" stroke="#222" /><circle cx="17" cy="17" r="7.500" fill="#444" stroke="#888" /><text x="13" y="22" font-size="13" fill="#fff" stroke="none">2</text></svg>
        </div>
    </div>

    <!-- DIALOG -->

    <div class="dialog" role="dialog" aria-label="Editar casos e combinações de cargas">
        <div class="dlghead">
            Editar casos e combinações de cargas
            <button aria-label="Fechar"><svg viewBox="0 0 12 12"><path d="M1 1l10 10M11 1L1 11" /></svg></button>
        </div>

        <div class="tabs" role="tablist">
            {#each dialogTabs as t, i}
                <button role="tab" class:on={activeTab === i} aria-selected={activeTab === i} onclick={() => (activeTab = i)}>{t}</button>
            {/each}
        </div>

        <div class="panel">
            <div class="group list">
                <h3>Combinações de resultados existentes</h3>
                <div class="results">
                    {#each results as [kind, no, text], i}
                        <button class="result" class:on={selected === i} onclick={() => (selected = i)}>
                            <span class="no">{@render badge(kind)}{no}</span>
                            <span class="desc">{text}</span>
                        </button>
                    {/each}
                    <div class="rest"><span></span></div>
                </div>
                <div class="hscroll">{@render chevron('left')}<i></i>{@render chevron('right')}</div>
                <div class="foot">
                    {@render tool('wnew', 'Novo')}
                    {@render tool('wcopy', 'Copiar')}
                    {@render tool('renum', 'Renumerar')}
                    <label class="combo filter">
                        <span class="swatch"></span>
                        <select aria-label="Filtro"><option>Tudo (4)</option></select>
                        {@render chevron('down')}
                    </label>
                    {@render tool('del', 'Eliminar', true)}
                </div>
            </div>

            <div class="detail">
                <div class="top">
                    <div class="group">
                        <h3><label for="crno">CR nº</label></h3>
                        <div class="body"><input id="crno" class="no" value="2" disabled /></div>
                    </div>
                    <div class="group">
                        <h3>Designação da combinação de resultados</h3>
                        <div class="body">
                            <label class="combo tiny">
                                <span class="swatch"></span>
                                <select aria-label="Situação de projeto"><option></option></select>
                                {@render chevron('down')}
                            </label>
                            <label class="combo wide">
                                <select aria-label="Designação"><option>1.00*LC2 + 1.00*LC3 + 1.00*LC4 + 1.00*LC5</option></select>
                                {@render chevron('down')}
                            </label>
                        </div>
                    </div>
                    <div class="group">
                        <h3><label for="solve">A resolver</label></h3>
                        <div class="body">
                            <span class="check">
                                <input id="solve" type="checkbox" bind:checked={solve} />
                                {#if solve}
                                    <svg viewBox="0 0 13 13"><path d="M3 6l3 4 5-7" /></svg>
                                {/if}
                            </span>
                        </div>
                    </div>
                </div>

                <div class="tabs inner" role="tablist">
                    <button role="tab" class="on" aria-selected="true">Geral</button>
                    <button role="tab" aria-selected="false">Parâmetros de cálculo</button>
                </div>

                <div class="sub">
                    <div class="lists">
                        <div class="group">
                            <h3>Carregamento existente</h3>
                            <table class="grid">
                                <colgroup><col class="k" /><col /></colgroup>
                                <tbody>
                                    {#each existing as [kind, no, text]}
                                        <tr><td><span class="tag">{@render badge(kind)}{no}</span></td><td>{text}</td></tr>
                                    {/each}
                                    <tr class="fill"><td></td><td></td></tr>
                                </tbody>
                            </table>
                            <div class="foot">
                                {@render tool('funnel', 'Filtrar', true)}
                                <label class="combo filter off">
                                    <span class="swatch"></span>
                                    <select aria-label="Filtro de carregamento" disabled><option>Tudo (8)</option></select>
                                    {@render chevron('down')}
                                </label>
                                {@render tool('chk', 'Selecionar tudo', true)}
                                {@render tool('inv', 'Inverter seleção', true)}
                            </div>
                        </div>

                        <div class="transfer">
                            {@render tool('addp', 'Adicionar', true)}
                            {@render tool('addi', 'Adicionar com fator', true)}
                            <span></span>
                            {@render tool('back', 'Remover', true)}
                            {@render tool('back2', 'Remover tudo', true)}
                        </div>

                        <div class="group">
                            <h3>Carregamento em combinação de resultados CR2</h3>
                            <table class="grid head">
                                <colgroup><col class="f" /><col class="n" /><col class="d" /><col class="c" /><col /></colgroup>
                                <thead>
                                    <tr><th>Fator</th><th>nº</th><th>Designação</th><th>Critério</th><th>Grupo</th></tr>
                                </thead>
                                <tbody>
                                    {#each loading as no}
                                        <tr>
                                            <td class="num">1.00</td>
                                            <td><span class="tag">{@render badge('Qi A')}{no}</span></td>
                                            <td>Carga variável</td>
                                            <td>Variável</td>
                                            <td class="mid">-</td>
                                        </tr>
                                    {/each}
                                    <tr class="fill"><td></td><td></td><td></td><td></td><td></td></tr>
                                </tbody>
                            </table>
                            <div class="foot crit">
                                <label class="combo off factor"><select aria-label="Fator" disabled><option></option></select>{@render chevron('down')}</label>
                                {@render tool('tick', 'Aplicar fator', true)}
                                <input class="one" value="1,0" aria-label="Valor" disabled />
                                <label class="combo off grey"><select aria-label="Critério" disabled><option>Variável</option></select>{@render chevron('down')}</label>
                                {@render tool('tick', 'Aplicar critério', true)}
                                <label class="combo off grp"><select aria-label="Grupo" disabled><option></option></select>{@render chevron('down')}</label>
                                {@render tool('tick', 'Aplicar grupo', true)}
                            </div>
                        </div>
                    </div>

                    <div class="bottom">
                        <div class="group">
                            <h3><label for="comment">Comentário</label></h3>
                            <div class="body">
                                <span class="combo wide"><input id="comment" bind:value={comment} />{@render chevron('down')}</span>
                                {@render tool('notes', 'Comentários guardados')}
                            </div>
                        </div>
                        <div class="group plain">
                            {@render tool('look', 'Detalhes', true)}
                            {@render tool('hand', 'Configurar', true)}
                        </div>
                    </div>
                </div>
            </div>
        </div>

        <div class="dlgfoot">
            {@render tool('help', 'Ajuda')}
            {@render tool('load', 'Carregar')}
            {@render tool('store', 'Guardar')}
            <button class="push primary">OK</button>
            <button class="push">Cancelar</button>
        </div>
        <svg class="sizegrip" viewBox="0 0 10 10"><path d="M0 10L10 0M3 10l7-7M6 10l4-4M9 10l1-1" /></svg>
    </div>
</div>

<style>

:global(body){
    overflow:hidden;
}

.root{
    position:relative;
    height:100vh;
    display:flex;
    flex-direction:column;
    background:#d0d5df;
    color:#000;
    font:11px/16px "Open Sans", "Noto Sans", sans-serif;
}

.root *{
    box-sizing:border-box;
}

button, input, select{
    font:inherit;
    color:inherit;
    margin:0;
    padding:0;
    border:0;
    border-radius:0;
    background:none;
    appearance:none;
    opacity:1;
}

button{
    display:flex;
    align-items:center;
    justify-content:center;
    white-space:nowrap;
}

table{
    border-collapse:collapse;
    table-layout:fixed;
}

th{
    font-weight:400;
}

h3{
    margin:0;
    font:inherit;
}

svg{
    flex:none;
}

.icon{
    width:16px;
    height:16px;
    fill:none;
}

/* title and menu */

.titlebar{
    flex:none;
    display:flex;
    align-items:center;
    gap:5px;
    height:23px;
    padding-left:2px;
    background:#fff;
    color:#8c8c8c;
}

.winctl{
    width:120px;
    height:12px;
    margin-left:auto;
    margin-right:11px;
    fill:none;
    stroke:#777;
}

.menubar{
    flex:none;
    display:flex;
    align-items:center;
    gap:15px;
    height:24px;
    color:#3c3f4a;
}

.menubar .grip{
    margin-right:-15px;
}

.menubar .icon{
    margin-right:-5px;
}

.mdictl{
    width:50px;
    height:12px;
    margin-left:auto;
    fill:none;
    stroke:#555;
}

/* tool bars */

.grip{
    flex:none;
    width:10px;
    height:18px;
    background:repeating-linear-gradient(#a4a9b4 0 2px, transparent 2px 4px) 5px 1px / 2px 16px no-repeat;
}

.toolrow{
    flex:none;
    display:flex;
    align-items:flex-end;
    gap:1px;
    height:26px;
}

.toolbar{
    display:flex;
    align-items:center;
    height:25px;
    padding-right:1px;
    background:linear-gradient(#eaeef7, #d3d8e2);
    border-bottom:1px solid #b9bfca;
    border-radius:2px;
}

.tb{
    width:22px;
    height:22px;
}

.tb.on{
    background:linear-gradient(#fbdcae, #fdc36a 60%, #ffe7a8);
    border:1px solid #b0935c;
}

.sep{
    width:8px;
    height:16px;
    background:linear-gradient(#9ba1ad, #9ba1ad) 4px 0 / 1px 100% no-repeat;
}

.drop{
    width:13px;
    height:4px;
    background:#60646e;
    clip-path:polygon(3px 0, 10px 0, 6px 4px);
}

.lcbox{
    display:grid;
    width:216px;
    height:20px;
    margin:0 2px;
    background:#fff;
}

.lcbox select{
    grid-area:1 / 1;
    padding-left:3px;
}

.lcarrow{
    grid-area:1 / 1;
    justify-self:end;
    width:15px;
    margin:1px;
    background:linear-gradient(#777, #777) 4px 8px / 6px 1px no-repeat, linear-gradient(#777, #777) 5px 9px / 4px 1px no-repeat, linear-gradient(#777, #777) 6px 10px / 2px 1px no-repeat, #e0e5ee;
    pointer-events:none;
}

/* main split */

.main{
    flex:1;
    min-height:0;
    display:flex;
    gap:5px;
    padding:1px 1px 0;
}

.navigator{
    flex:none;
    width:399px;
    display:flex;
    flex-direction:column;
}

.panehead{
    flex:none;
    display:flex;
    align-items:center;
    justify-content:space-between;
    height:19px;
    padding:0 2px 2px 3px;
    background:#b9c0cb;
    color:#4a4d58;
}

.pane-icons{
    width:30px;
    height:12px;
    fill:none;
    stroke:#666;
}

.treebox{
    flex:1;
    min-height:0;
    display:grid;
    grid-template:minmax(0, 1fr) 18px / minmax(0, 1fr) 16px;
    margin:3px 2px 0;
    background:#fdfcf3;
    border:1px solid #8e939e;
}

.tree{
    overflow:hidden;
    padding-left:2px;
}

.node{
    display:flex;
    align-items:center;
    height:18px;
    white-space:nowrap;
}

.node .icon{
    margin:0 4px 0 2px;
}

.guide{
    flex:none;
    display:flex;
    align-items:center;
    justify-content:center;
    width:19px;
    height:18px;
}

.guide.through{
    background:repeating-linear-gradient(#8a8a8a 0 1px, transparent 1px 2px) 9px 0 / 1px 100% no-repeat;
}

.guide.own{
    background:repeating-linear-gradient(90deg, #8a8a8a 0 1px, transparent 1px 2px) 9px 9px / 10px 1px no-repeat;
}

.guide.own.through{
    background:repeating-linear-gradient(#8a8a8a 0 1px, transparent 1px 2px) 9px 0 / 1px 100% no-repeat, repeating-linear-gradient(90deg, #8a8a8a 0 1px, transparent 1px 2px) 9px 9px / 10px 1px no-repeat;
}

.guide.own.half{
    background:repeating-linear-gradient(#8a8a8a 0 1px, transparent 1px 2px) 9px 0 / 1px 9px no-repeat, repeating-linear-gradient(90deg, #8a8a8a 0 1px, transparent 1px 2px) 9px 9px / 10px 1px no-repeat;
}

.exp{
    width:9px;
    height:9px;
    border:1px solid #919191;
    background:linear-gradient(#2b4f9c, #2b4f9c) 1px 3px / 5px 1px no-repeat, #fff;
}

.exp.plus{
    background:linear-gradient(#2b4f9c, #2b4f9c) 1px 3px / 5px 1px no-repeat, linear-gradient(#2b4f9c, #2b4f9c) 3px 1px / 1px 5px no-repeat, #fff;
}

.bold{
    font-weight:700;
}

.chevron{
    width:10px;
    height:10px;
    fill:none;
    stroke:#505050;
    stroke-width:2;
}

.chevron.up{
    transform:rotate(180deg);
}

.chevron.left{
    transform:rotate(90deg);
}

.chevron.right{
    transform:rotate(-90deg);
}

.vscroll, .hscroll{
    display:flex;
    align-items:center;
    justify-content:space-between;
    background:#f0f0f0;
}

.vscroll{
    flex-direction:column;
    padding:4px 0;
}

.vscroll i{
    width:16px;
    height:310px;
    margin:3px 0 auto;
    background:#cdcdcd;
}

.hscroll{
    padding:0 4px 0 3px;
}

.hscroll i{
    width:224px;
    height:15px;
    margin:0 auto 0 3px;
    background:#cdcdcd;
}

.navtabs{
    flex:none;
    display:flex;
    align-items:center;
    gap:4px;
    height:24px;
    padding:0 3px 1px;
    color:#4a4d58;
}

.navtabs button{
    gap:2px;
    height:20px;
    padding:0 3px;
}

.navtabs .on{
    background:#f1f3f3;
    border:1px solid #c3dcdc;
    border-top:0;
    padding:0 3px 0 1px;
}

/* model view */

.work{
    flex:1;
    min-width:0;
    display:flex;
    flex-direction:column;
    gap:8px;
}

.viewport{
    flex:1;
    min-height:0;
    display:grid;
    background:#0a0a0a;
    border-left:1px solid #777;
    overflow:hidden;
}

.viewport svg{
    grid-area:1 / 1;
    width:100%;
    height:100%;
    min-height:0;
    font-family:"Liberation Sans", sans-serif;
}

.caption{
    grid-area:1 / 1;
    padding:6px 5px;
    color:#fff;
    font:11px/14px "Liberation Sans", sans-serif;
    z-index:1;
}

/* table pane */

.tablepane{
    flex:none;
    display:flex;
    flex-direction:column;
    height:198px;
    background:#f0f0f0;
    font-family:"Liberation Sans", sans-serif;
}

.tablepane .panehead{
    font-family:"Open Sans", sans-serif;
}

.tabletools{
    flex:none;
    display:flex;
    align-items:center;
    height:25px;
    padding:0 9px 2px;
    background:linear-gradient(#eaeef7, #cfd4de);
}

.sheetbox{
    flex:none;
    display:flex;
    align-items:flex-start;
    gap:2px;
    height:118px;
    padding:2px 2px 0;
    border-top:1px solid #555;
    border-left:1px solid #777;
    border-bottom:1px solid #888;
    background:#f0f0f0;
}

.nodes{
    flex:1;
}

.nodes .c0{ width:45px; }
.nodes .c1{ width:83px; }
.nodes .c2{ width:72px; }
.nodes .c3{ width:91px; }
.nodes .c4{ width:78px; }

.nodes th, .nodes td{
    padding:0;
    height:16px;
    line-height:14px;
    border:1px solid #9a9a9a;
}

.nodes td{
    background:#fff;
    padding:0 4px;
}

.nodes tbody th{
    background:#e1e1e1;
}

.nodes .letters th{
    height:15px;
    background:#e1e1e1;
    border-bottom-color:#666;
}

.nodes .letters .corner{
    line-height:14px;
    vertical-align:middle;
    background:#e1e1e1;
}

.nodes .names th{
    height:32px;
    vertical-align:bottom;
    background:#f0f0f0;
    padding-bottom:2px;
}

.nodes th.blue, .nodes .letters .blue{
    background:#3399ff;
    color:#fff;
}

.nodes .focus{
    outline:1px dotted #000;
    outline-offset:-2px;
}

.mid{
    text-align:center;
}

.num{
    text-align:right;
}

.sheetbox .vscroll{
    width:16px;
    height:97px;
}

.sheetbox .vscroll i{
    height:37px;
}

.sheets{
    flex:none;
    display:flex;
    height:18px;
    overflow:hidden;
}

.sheets > button{
    padding:0 3px 0 2px;
    background:#e1e1e1;
    border:1px solid #666;
    border-top:0;
    border-left:0;
    border-radius:0 0 4px 4px;
}

.sheets > .on{
    padding:0 4px;
    background:#f0f0f0;
}

.pager{
    flex:none;
    display:flex;
    margin-left:auto;
}

.pager button{
    width:16px;
    height:17px;
    border:1px solid #fff;
    border-right-color:#888;
    border-bottom-color:#888;
}

.pager svg{
    width:10px;
    height:10px;
    fill:#000;
    stroke:#000;
}

.pager :disabled svg{
    fill:#999;
    stroke:#999;
}

/* status */

.status{
    flex:none;
    display:flex;
    justify-content:flex-end;
    gap:1px;
    height:21px;
    padding-top:2px;
    border-top:1px solid #9fa5b1;
    background:linear-gradient(#e3e6ec, #a9aebb 50%, #bbc0ca);
    font-family:"Liberation Sans", sans-serif;
    line-height:14px;
    color:#222;
}

.status span{
    padding:0 4px 0 1px;
    border:1px solid #dfe2e8;
    border-right-color:#999;
    border-bottom-color:#999;
}

.status .on{
    padding:0 1px;
    border-color:#111 #fff #fff #111;
}

.status i{
    border-left:1px solid #9a9fa9;
}

.w1{ width:188px; }
.w2{ width:87px; }
.w3{ width:73px; }

/* task bar */

.taskbar{
    flex:none;
    display:flex;
    height:40px;
    background:#1e1e1e;
}

.sys{
    width:48px;
    height:40px;
}

.sys svg{
    width:18px;
    height:18px;
    fill:none;
    stroke:#fff;
    stroke-width:1;
}

.sys:first-child svg{
    stroke:none;
}

.app{
    width:49px;
    height:40px;
    padding:0 4px;
}

.sys + .app{
    margin-left:2px;
}

.app svg{
    width:24px;
    height:24px;
    fill:none;
}

.app.run{
    background:linear-gradient(#76b9ed, #76b9ed) center bottom / 40px 2px no-repeat;
}

.app.active{
    background:linear-gradient(#76b9ed, #76b9ed) center bottom / 100% 2px no-repeat, #4a4a4a;
}

.tray{
    display:flex;
    align-items:center;
    gap:8px;
    margin-left:auto;
    padding-right:17px;
    color:#fff;
}

.tray svg{
    width:16px;
    height:16px;
    fill:none;
    stroke:#fff;
}

.tray .note{
    width:26px;
    height:26px;
    margin-left:8px;
}

.clock{
    text-align:center;
    line-height:18px;
}

/* dialog */

.dialog{
    position:absolute;
    left:480px;
    top:164px;
    width:972px;
    display:flex;
    flex-direction:column;
    background:#f0f0f0;
    border:1px solid #555;
    border-width:0 1px 1px 0;
    box-shadow:0 6px 16px rgba(0, 0, 0, .45);
    font-family:"Liberation Sans", sans-serif;
}

.dlghead{
    display:flex;
    align-items:center;
    justify-content:space-between;
    height:30px;
    padding:0 9px 0 8px;
    background:#fff;
    font-family:"Open Sans", sans-serif;
}

.dlghead svg{
    width:12px;
    height:12px;
    stroke:#000;
}

.tabs{
    display:flex;
    align-items:flex-end;
    height:28px;
    margin-bottom:-1px;
    padding-left:8px;
}

.tabs button{
    height:19px;
    padding:0 3px;
    background:#f0f0f0;
    border:1px solid #d9d9d9;
    border-left-width:0;
}

.tabs button:first-child{
    border-left-width:1px;
}

.tabs .on{
    height:22px;
    padding:0 4px 2px;
    background:#fff;
    border-bottom-color:#fff;
}

.tabs.inner{
    height:22px;
    padding:0;
    margin-top:8px;
}

.tabs.inner .on{
    padding:0 8px 2px 6px;
}

.panel{
    display:grid;
    grid-template-columns:270px minmax(0, 1fr);
    gap:7px;
    margin:0 8px 0 7px;
    padding:8px 7px 9px;
    background:#fff;
    border:1px solid #dcdcdc;
}

.tabs:not(.inner){
    z-index:1;
}

.group{
    display:flex;
    flex-direction:column;
    min-width:0;
    background:#f0f4fa;
    border:1px solid #aaaaee;
    border-top:0;
    border-left-color:#dce6f4;
    clip-path:polygon(0 0, calc(100% - 10px) 0, 100% 11px, 100% 100%, 0 100%);
}

.group h3{
    flex:none;
    height:17px;
    padding-left:1px;
    line-height:17px;
    background:#dce6f4;
    color:#1e4a78;
    border-bottom:1px solid #fff;
}

.group .body{
    display:flex;
    align-items:center;
    gap:7px;
    height:28px;
    padding:0 3px 0 2px;
}

.list{
    height:630px;
}

.results{
    flex:1;
    display:flex;
    flex-direction:column;
    background:#fff;
    border-top:1px solid #8a8a8a;
    border-left:1px solid #8a8a8a;
    overflow:hidden;
}

.result{
    flex:none;
    justify-content:flex-start;
    height:19px;
    color:#1f4f9c;
}

.result .no{
    flex:none;
    display:flex;
    align-items:center;
    gap:4px;
    width:76px;
    height:19px;
    border-right:1px solid #000;
}

.result .desc{
    padding-left:4px;
}

.result.on{
    background:#0078d7;
    color:#ff0;
    outline:1px dotted #e08a3c;
    outline-offset:-1px;
}

.result.on .no{
    border-right-color:#fff;
}

.rest{
    flex:1;
    display:flex;
}

.rest span{
    width:76px;
    border-right:1px solid #000;
}

.badge{
    flex:none;
    display:inline-block;
    width:25px;
    height:11px;
    font-size:10px;
    line-height:11px;
    text-align:center;
    background:#d8d8d8;
    color:#fff;
}

.badge.g{ background:#000; }
.badge.q{ background:#c0504d; }
.badge.str{ background:#cd6663; }

.list .hscroll{
    flex:none;
    height:17px;
    border-bottom:1px solid #fff;
}

.list .hscroll i{
    width:123px;
}

.foot{
    flex:none;
    display:flex;
    align-items:center;
    gap:5px;
    height:30px;
    padding:2px 3px 0;
}

.tool{
    flex:none;
    width:25px;
    height:21px;
    background:#e1e1e1;
    border:1px solid #adadad;
}

.tool:disabled{
    background:#ccc;
    border-color:#bfbfbf;
}

.combo{
    display:grid;
    grid-template-columns:auto minmax(0, 1fr) 18px;
    align-items:center;
    height:21px;
    padding-left:3px;
    background:#fff;
    border:1px solid #7a7a7a;
}

.combo select, .combo input{
    grid-column:2;
    width:100%;
    padding-left:2px;
}

.combo .chevron{
    grid-column:3;
    stroke:#444;
    stroke-width:1;
    justify-self:center;
}

.swatch{
    width:25px;
    height:12px;
    background:#d8d8d8;
}

.filter{
    flex:1;
    margin:0 3px;
}

.combo.filter select{
    padding-left:4px;
}

.foot .filter.off{
    margin:0 -1px;
}

.off{
    color:#777;
    border-color:#ccc;
}

.off .chevron{
    stroke:#aaa;
}

.tiny{
    width:50px;
}

.tiny select{
    padding:0;
}

.wide{
    flex:1;
}

.detail{
    display:flex;
    flex-direction:column;
}

.top{
    display:grid;
    grid-template-columns:98px minmax(0, 1fr) 162px;
    gap:8px;
}

.top .group{
    height:46px;
}

input.no{
    width:45px;
    height:20px;
    padding-right:5px;
    border:1px solid #ccc;
    background:#fff;
    color:#777;
    text-align:right;
}

.check{
    display:grid;
}

.check input, .check svg{
    grid-area:1 / 1;
    width:13px;
    height:13px;
}

.check input{
    background:#fff;
    border:1px solid #333;
}

.check svg{
    fill:none;
    stroke:#111;
    pointer-events:none;
}

.sub{
    flex:1;
    display:flex;
    flex-direction:column;
    gap:10px;
    padding:9px 5px 5px;
    border:1px solid #dcdcdc;
    border-left-color:#777;
}

.lists{
    flex:1;
    display:grid;
    grid-template-columns:252px 26px minmax(0, 1fr);
    gap:10px;
}

.transfer{
    display:flex;
    flex-direction:column;
    align-items:flex-end;
    gap:5px;
    padding-top:134px;
}

.transfer span{
    height:20px;
}

.grid{
    flex:1;
    width:100%;
    height:438px;
    line-height:15px;
    border-top:1px solid #999;
}

.grid .k{ width:78px; }
.grid .f{ width:54px; }
.grid .n{ width:78px; }
.grid .d{ width:100px; }
.grid .c{ width:72px; }

.grid td, .grid th{
    height:16px;
    padding:0 3px;
    background:#f0f0f0;
    border-left:1px solid #999;
    white-space:nowrap;
    overflow:hidden;
}

.grid th{
    border-bottom:1px solid #999;
}

.grid .num{
    padding-right:4px;
}

.grid .fill td{
    height:auto;
    background:#e8eeee;
}

.tag{
    display:flex;
    align-items:center;
    gap:4px;
    margin-left:-2px;
}

.crit{
    gap:4px;
    padding:2px 2px 0;
}

.factor{
    width:56px;
}

.one{
    width:33px;
    height:21px;
    margin:0 -3px 0 2px;
    text-align:center;
    background:#ccc;
    border:1px solid #bfbfbf;
    color:#777;
}

.grey{
    flex:1;
    padding-left:0;
    background:#ccc;
    border-color:#bfbfbf;
}

.grp{
    width:35px;
    padding:0;
    margin-left:17px;
}

.bottom{
    display:grid;
    grid-template-columns:minmax(0, 1fr) 157px;
    gap:7px;
}

.bottom .group{
    height:46px;
}

.bottom .body{
    gap:3px;
}

.group.plain{
    flex-direction:row;
    align-items:flex-end;
    justify-content:flex-end;
    gap:5px;
    padding:0 3px 3px;
    border-top:1px solid #dce6f4;
    clip-path:none;
}

.dlgfoot{
    display:flex;
    align-items:center;
    gap:5px;
    height:38px;
    padding:4px 8px 0 7px;
}

.dlgfoot .tool:first-child{
    margin-right:5px;
}

.push{
    width:73px;
    height:21px;
    margin-left:5px;
    background:#e1e1e1;
    border:1px solid #adadad;
}

.push.primary{
    margin-left:auto;
    border:2px solid #0078d7;
}

.sizegrip{
    position:absolute;
    right:0;
    bottom:0;
    width:10px;
    height:10px;
    stroke:#888;
}

</style>
